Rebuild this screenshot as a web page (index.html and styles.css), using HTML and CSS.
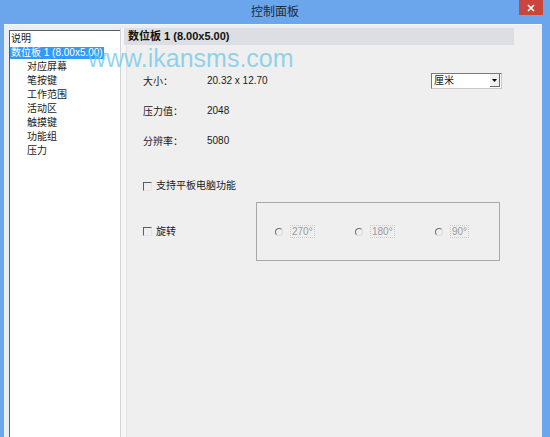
FILE: index.html
```html
<!DOCTYPE html>
<html lang="zh-CN">
<head>
  <meta charset="UTF-8" />
  <title>控制面板</title>
  <link rel="stylesheet" href="styles.css">
</head>
<body>
  <div class="window">
    <div class="titlebar">
      <span class="title">控制面板</span>
      <span class="close">
        <svg width="8" height="8" viewBox="0 0 8 8"><path d="M1 1L7 7M7 1L1 7" stroke="#fff" stroke-width="1.6"/></svg>
      </span>
    </div>

    <div class="frame">
      <ul class="tree">
        <li>说明</li>
        <li><span class="selected">数位板 1 (8.00x5.00)</span></li>
        <li class="child">对应屏幕</li>
        <li class="child">笔按键</li>
        <li class="child">工作范围</li>
        <li class="child">活动区</li>
        <li class="child">触摸键</li>
        <li class="child">功能组</li>
        <li class="child">压力</li>
      </ul>

      <div class="content">
        <div class="head">数位板 1 (8.00x5.00)</div>

        <div class="info">
          <span class="label">大小：</span>
          <span class="value">20.32 x 12.70</span>
          <div class="select">
            <span class="select-text">厘米</span>
            <span class="select-btn">
              <svg width="5" height="3" viewBox="0 0 5 3"><path d="M0 0H5L2.5 3Z" fill="#000"/></svg>
            </span>
          </div>

          <span class="label">压力值：</span>
          <span class="value">2048</span>
          <span></span>

          <span class="label">分辨率：</span>
          <span class="value">5080</span>
          <span></span>
        </div>

        <label class="check first">
          <span class="box"></span>支持平板电脑功能
        </label>

        <div class="rotate-row">
          <label class="check">
            <span class="box"></span>旋转
          </label>
          <div class="group">
            <div class="radio"><span class="dot"></span><span class="deg">270°</span></div>
            <div class="radio"><span class="dot"></span><span class="deg">180°</span></div>
            <div class="radio"><span class="dot"></span><span class="deg">90°</span></div>
          </div>
        </div>
      </div>
    </div>

    <div class="watermark">www.ikansms.com</div>
  </div>
</body>
</html>
```

FILE: styles.css
```css
body {
  margin: 0;
  padding: 0;
  font-family: Tahoma, "Liberation Sans", "Noto Sans CJK SC", sans-serif;
  font-size: 10px;
  color: #1a1a1a;
  background-color: #6ba6ec;
}

.window {
  position: relative;
  width: 550px;
  height: 437px;
  overflow: hidden;
  display: flex;
  flex-direction: column;
  background-color: #6ba6ec;
}

.titlebar {
  position: relative;
  height: 24px;
  display: flex;
  align-items: center;
  justify-content: center;
}

.title {
  font-size: 12px;
  color: #1f2a3a;
  line-height: 14px;
  margin-top: -1px;
}

.close {
  position: absolute;
  top: 0;
  right: 7px;
  width: 24px;
  height: 15px;
  background-color: #c9463f;
  display: flex;
  align-items: center;
  justify-content: center;
}

.frame {
  flex: 1;
  display: flex;
  margin: 0 8px 0 4px;
  padding-left: 5px;
  background-color: #e9eef5;
  border-top: 1px solid #f6f8fb;
}

.tree {
  list-style: none;
  margin: 5px 0 0 0;
  padding: 1px 0 0 1px;
  width: 109px;
  background-color: #fff;
  border-left: 1px solid #5a5a5a;
  border-top: 1px solid #5a5a5a;
}

.tree li {
  height: 14px;
  line-height: 14px;
  white-space: nowrap;
}

.tree li.child {
  padding-left: 16px;
}

.selected {
  display: inline-block;
  line-height: 12px;
  padding: 0 1px;
  margin-left: -1px;
  background-color: #3399ff;
  color: #fff;
}

.content {
  flex: 1;
  margin-top: 3px;
  background-color: #efefef;
  border-left: 1px solid #d4d4d4;
  box-shadow: inset 5px 0 0 #f6f6f6, inset 6px 0 0 #e2e2e2;
  padding-left: 3px;
}

.head {
  height: 17px;
  line-height: 17px;
  margin-right: 28px;
  padding-left: 4px;
  background-color: #dcdee3;
  font-size: 11px;
  font-weight: bold;
  color: #111;
}

.info {
  display: grid;
  grid-template-columns: 64px 1fr auto;
  grid-auto-rows: 14px;
  row-gap: 16px;
  align-items: center;
  margin: 28px 40px 0 19px;
}

.select {
  display: flex;
  align-items: center;
  width: 69px;
  height: 14px;
  margin-top: 1px;
  background-color: #fff;
  border: 1px solid #7a7a7a;
  border-right-color: #c8c8c8;
  border-bottom-color: #c8c8c8;
}

.select-text {
  flex: 1;
  padding-left: 2px;
  line-height: 14px;
}

.select-btn {
  width: 9px;
  height: 12px;
  margin-right: 1px;
  display: flex;
  align-items: center;
  justify-content: center;
  background-color: #f0f0f0;
  border-right: 1px solid #6a6a6a;
  border-bottom: 1px solid #6a6a6a;
}

.check {
  display: flex;
  align-items: center;
  gap: 4px;
  height: 14px;
  line-height: 14px;
  white-space: nowrap;
}

.check.first {
  margin: 32px 0 0 19px;
}

.box {
  width: 7px;
  height: 7px;
  border-top: 1px solid #5e5e5e;
  border-left: 1px solid #5e5e5e;
  border-right: 1px solid #e4e4e4;
  border-bottom: 1px solid #e4e4e4;
}

.rotate-row {
  display: flex;
  align-items: center;
  margin: 9px 0 0 19px;
}

.rotate-row .check {
  width: 113px;
}

.group {
  box-sizing: border-box;
  width: 244px;
  height: 59px;
  border: 1px solid #a8a8a8;
  display: flex;
  align-items: center;
  padding-left: 18px;
}

.radio {
  flex: none;
  width: 80px;
  display: flex;
  align-items: center;
  gap: 7px;
  color: #9a9a9a;
}

.dot {
  width: 6px;
  height: 6px;
  border-radius: 50%;
  border: 1px solid #dadada;
  border-top-color: #6e6e6e;
  border-left-color: #6e6e6e;
}

.deg {
  padding: 1px 2px;
  outline: 1px dotted #c9c9c9;
  outline-offset: -1px;
}

.watermark {
  position: absolute;
  left: 88px;
  top: 43px;
  font-family: "Liberation Sans", sans-serif;
  font-size: 25px;
  line-height: 30px;
  color: rgba(112, 200, 232, 0.75);
  pointer-events: none;
}
```
